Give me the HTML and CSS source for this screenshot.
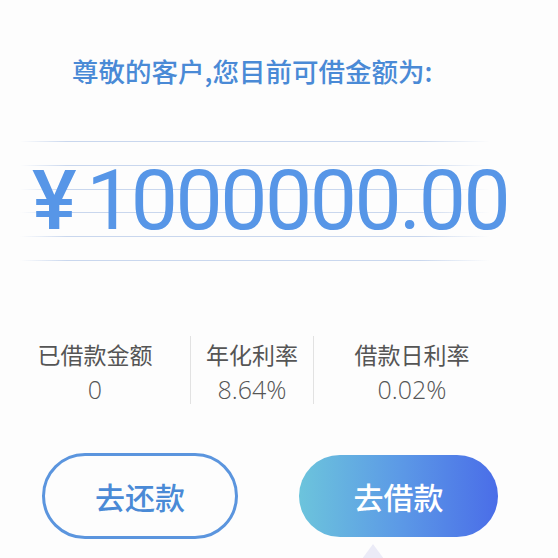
FILE: index.html
```html
<!DOCTYPE html>
<html lang="zh-CN">
<head>
  <meta charset="UTF-8">
  <meta name="viewport" content="width=device-width, initial-scale=1.0">
  <title>借款</title>
  <link rel="stylesheet" href="styles.css">
</head>
<body>

  <div class="page">
    <h1 class="title">尊敬的客户,您目前可借金额为:</h1>

    <div class="amount"><span class="yen">¥</span>1000000.00</div>

    <div class="stats">
      <div class="stat">
        <div class="label">已借款金额</div>
        <div class="value">0</div>
      </div>
      <div class="stat stat-mid">
        <div class="label">年化利率</div>
        <div class="value">8.64%</div>
      </div>
      <div class="stat">
        <div class="label">借款日利率</div>
        <div class="value">0.02%</div>
      </div>
    </div>

    <div class="actions">
      <button class="btn btn-outline">去还款</button>
      <button class="btn btn-fill">去借款</button>
    </div>

    <div class="pointer"></div>
  </div>

</body>
</html>
```

FILE: styles.css
```css
body {
  margin: 0;
  padding: 0;
  background-color: #fdfdfd;
  font-family: "Noto Sans CJK SC", "Noto Sans", sans-serif;
  overflow: hidden;
}

.page {
  width: 558px;
  height: 558px;
}

.title {
  margin: 0;
  padding: 56px 0 0 72px;
  font-size: 26.5px;
  line-height: 30px;
  font-weight: 500;
  color: #4a8ad6;
}

.amount {
  margin-top: 55px;
  margin-left: 20px;
  width: 470px;
  height: 121px;
  padding-left: 12px;
  box-sizing: border-box;
  background-image:
    linear-gradient(to right, #fdfdfd 0%, rgba(253, 253, 253, 0) 10%, rgba(253, 253, 253, 0) 85%, #fdfdfd 100%),
    repeating-linear-gradient(to bottom, #c9d7ee 0, #c9d7ee 1px, transparent 1px, transparent 23.8px);
  font-family: Roboto, "Liberation Sans", sans-serif;
  font-weight: 400;
  font-size: 84px;
  line-height: 120px;
  letter-spacing: -2.5px;
  color: #5796e7;
  white-space: nowrap;
}

.yen {
  margin-right: 12px;
  font-weight: 500;
}

.stats {
  display: grid;
  grid-template-columns: 190px 124px 196px;
  margin-top: 74px;
  height: 68px;
}

.stat {
  text-align: center;
  color: #555;
}

.stat-mid {
  border-left: 1px solid #e2e2e2;
  border-right: 1px solid #e2e2e2;
}

.label {
  font-size: 23px;
  line-height: 36px;
  font-weight: 400;
}

.value {
  margin-top: 3px;
  font-family: "Open Sans", "Liberation Sans", sans-serif;
  font-size: 25px;
  line-height: 29px;
  font-weight: 300;
}

.actions {
  display: flex;
  align-items: center;
  gap: 61px;
  margin-top: 49px;
  padding-left: 42px;
}

.btn {
  font-family: "Noto Sans CJK SC", sans-serif;
  font-size: 30px;
  font-weight: 500;
  border-radius: 50px;
  cursor: pointer;
}

.btn-outline {
  width: 196px;
  height: 86px;
  background-color: #fdfdfd;
  border: 3px solid #5b95de;
  color: #4a8ad6;
}

.btn-fill {
  width: 199px;
  height: 82px;
  border: none;
  color: #fff;
  background: linear-gradient(to right, #6cc4dc 0%, #5c9ae6 50%, #4a6de8 100%);
}

.pointer {
  width: 0;
  height: 0;
  margin-top: 5px;
  margin-left: 362px;
  border-left: 11px solid transparent;
  border-right: 11px solid transparent;
  border-bottom: 15px solid #ebebf7;
}
```
